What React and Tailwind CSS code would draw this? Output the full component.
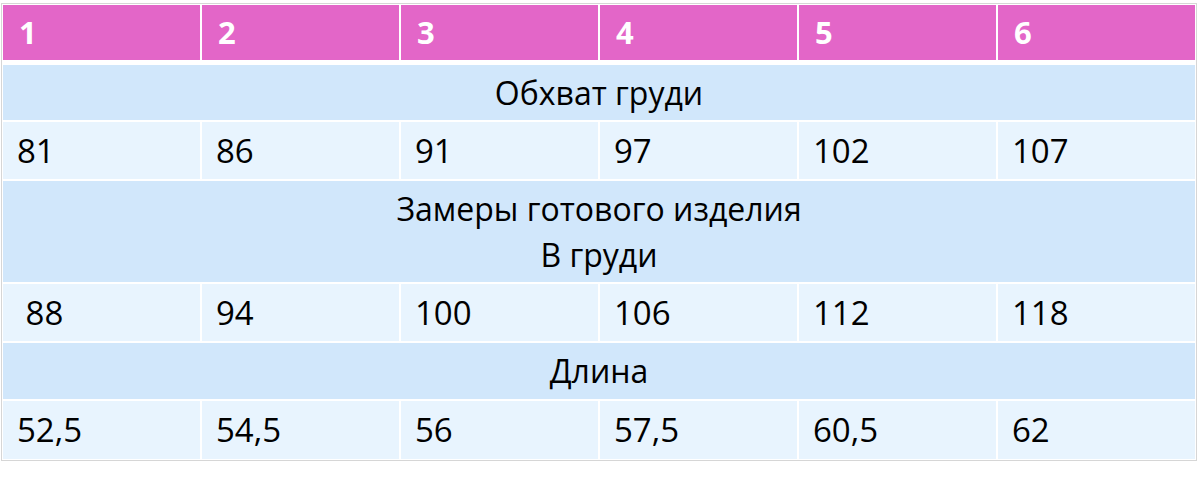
const sizes = ["1", "2", "3", "4", "5", "6"]

const sections = [
  { title: ["Обхват груди"], values: ["81", "86", "91", "97", "102", "107"], h: "h-[55px]", vh: "h-[57px]" },
  { title: ["Замеры готового изделия", "В груди"], values: ["\u00a088", "94", "100", "106", "112", "118"], h: "h-[101px]", vh: "h-[57px]" },
  { title: ["Длина"], values: ["52,5", "54,5", "56", "57,5", "60,5", "62"], h: "h-[56px]", vh: "h-[58px]" },
]

export default function App() {
  return (
    <div className="w-[1200px] h-[477px] bg-white pt-[3px] pl-[1px]" style={{ fontFamily: '"Open Sans", "Noto Sans", sans-serif' }}>
      <div className="w-[1196px] border border-[#d6d6d6] bg-white p-[1px]">
        <div className="flex flex-col gap-[2px]">
          {/* header row */}
          <div className="grid grid-cols-6 gap-[2px] mb-[3px]">
            {sizes.map((s) => (
              <div key={s} className="h-[55px] bg-[#e366c8] flex items-center pl-[16px] text-[31px] font-bold text-white">
                {s}
              </div>
            ))}
          </div>

          {sections.map((sec, i) => (
            <div key={i} className="flex flex-col gap-[2px]">
              <div className={`${sec.h} bg-[#d1e7fb] flex flex-col items-center justify-center text-[32px] text-black leading-[46px]`}>
                {sec.title.map((t) => (
                  <span key={t}>{t}</span>
                ))}
              </div>
              <div className="grid grid-cols-6 gap-[2px]">
                {sec.values.map((v, j) => (
                  <div key={j} className={`${sec.vh} bg-[#e8f4fe] flex items-center pl-[14px] text-[33px] text-black`}>
                    {v}
                  </div>
                ))}
              </div>
            </div>
          ))}
        </div>
      </div>
    </div>
  )
}
